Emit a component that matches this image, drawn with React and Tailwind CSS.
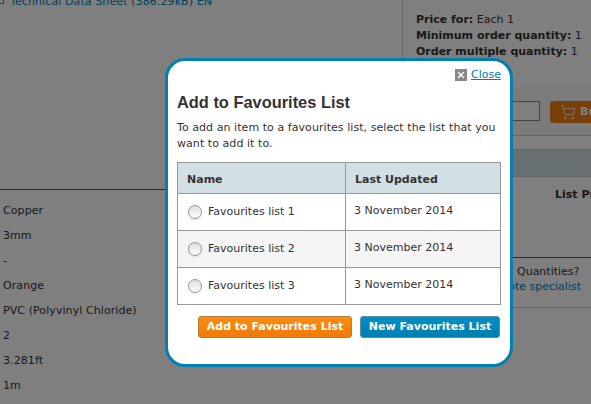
import { ShoppingCart, X } from "lucide-react";

const specs = ["Copper", "3mm", "-", "Orange", "PVC (Polyvinyl Chloride)", "2", "3.281ft", "1m"];
const lists = ["Favourites list 1", "Favourites list 2", "Favourites list 3"];

export default function App() {
  return (
    <div className="relative h-[404px] w-[591px] overflow-hidden bg-white font-['DejaVu_Sans',sans-serif] text-[11px] text-[#333]">
      {/* page behind the dialog */}
      <div className="flex h-full">
        <div className="w-[402px] shrink-0">
          <div className="-mt-[6px] flex h-[196px] items-start border-b border-[#0b6a8c] text-[#0080b0]">
            <span className="mt-[3px] mr-[3px] h-[7px] w-[7px] shrink-0 -translate-x-[3px] border border-[#777] bg-white" />
            <span className="tracking-[0.1px]">Technical Data Sheet (386.29kB) EN</span>
          </div>
          <div className="pl-[3px] pt-[8px]">
            {specs.map((s) => (
              <div key={s} className="h-[25px] leading-[25px] tracking-[0.08px]">{s}</div>
            ))}
          </div>
        </div>
        <div className="w-[189px] shrink-0">
          <div className="h-[86px] border-l border-[#ccc] pl-[13px] pt-[12px] leading-4">
            <div><b>Price for:</b> Each 1</div>
            <div><b>Minimum order quantity:</b> 1</div>
            <div><b>Order multiple quantity:</b> 1</div>
          </div>
          <div className="flex h-[50px] items-start gap-[10px] border-b border-[#ccc] bg-[#f7f7f7] pl-[40px] pt-[15px] whitespace-nowrap">
            <div className="h-[20px] w-[98px] shrink-0 border border-[#888] bg-white" />
            <div className="flex h-[22px] w-[60px] shrink-0 items-center gap-1 rounded bg-[#f08010] pl-[10px] font-bold text-white">
              <ShoppingCart size={16} strokeWidth={1.25} className="shrink-0" />
              Buy
            </div>
          </div>
          <div className="h-[13px]" />
          <div className="h-[28px] border-y border-[#ccc] bg-[#d2e0e5]" />
          <div className="h-[81px] border-b border-[#0b6a8c] pl-[153px] pt-[10px] font-bold whitespace-nowrap">List Price</div>
          <div className="h-[50px] border-b border-[#ccc] pt-[6px] leading-[15px] whitespace-nowrap">
            <div className="pl-[115px]">Quantities?</div>
            <div className="pl-[82px] text-[#0080b0]">a quote specialist</div>
          </div>
        </div>
      </div>

      <div className="absolute inset-0 bg-black/50" />

      {/* dialog */}
      <div className="absolute left-[165px] top-[58px] h-[309px] w-[348px] rounded-[20px] border-[3px] border-[#0080b0] bg-white px-[9px]">
        <div className="flex items-center justify-end gap-[4px] pt-[7px] leading-[14px]">
          <span className="flex h-[12px] w-[12px] items-center justify-center bg-[#888] text-white">
            <X size={10} strokeWidth={3.5} />
          </span>
          <span className="text-[#0080b0] underline">Close</span>
        </div>
        <h2 className="mt-[11px] font-['Liberation_Sans',sans-serif] text-[16.4px] leading-[18px] font-bold">Add to Favourites List</h2>
        <p className="mt-[9px] leading-[16px] tracking-[0.06px]">
          To add an item to a favourites list, select the list that you want to add it to.
        </p>
        <table className="mt-[10px] w-[324px] table-fixed border-collapse border border-[#999]">
          <thead>
            <tr className="h-[31px] bg-[#d2e0e5] text-left font-bold">
              <th className="w-[168px] border border-[#999] pl-[9px] pt-[4px]">Name</th>
              <th className="border border-[#999] pl-[9px] pt-[4px]">Last Updated</th>
            </tr>
          </thead>
          <tbody>
            {lists.map((name, i) => (
              <tr key={name} className={i === 1 ? "h-[37px] bg-[#f5f5f5]" : "h-[37px]"}>
                <td className="border border-[#999] pl-[10px]">
                  <div className="flex items-center gap-[6px]">
                    <span className="h-[14px] w-[14px] rounded-full border border-[#999] bg-gradient-to-b from-[#dcdcdc] to-white shadow-sm" />
                    {name}
                  </div>
                </td>
                <td className="border border-[#999] pb-[2px] pl-[8px]">3 November 2014</td>
              </tr>
            ))}
          </tbody>
        </table>
        <div className="mt-[11px] flex justify-end gap-[8px] pr-[1px] font-bold text-white">
          <button className="h-[22px] w-[154px] rounded-[3px] border border-[#b0803f] bg-gradient-to-b from-[#ff8c10] to-[#ee7a08]">
            Add to Favourites List
          </button>
          <button className="h-[22px] w-[140px] rounded-[3px] border border-[#5d8fa8] bg-gradient-to-b from-[#0090c8] to-[#007fae]">
            New Favourites List
          </button>
        </div>
      </div>
    </div>
  );
}
